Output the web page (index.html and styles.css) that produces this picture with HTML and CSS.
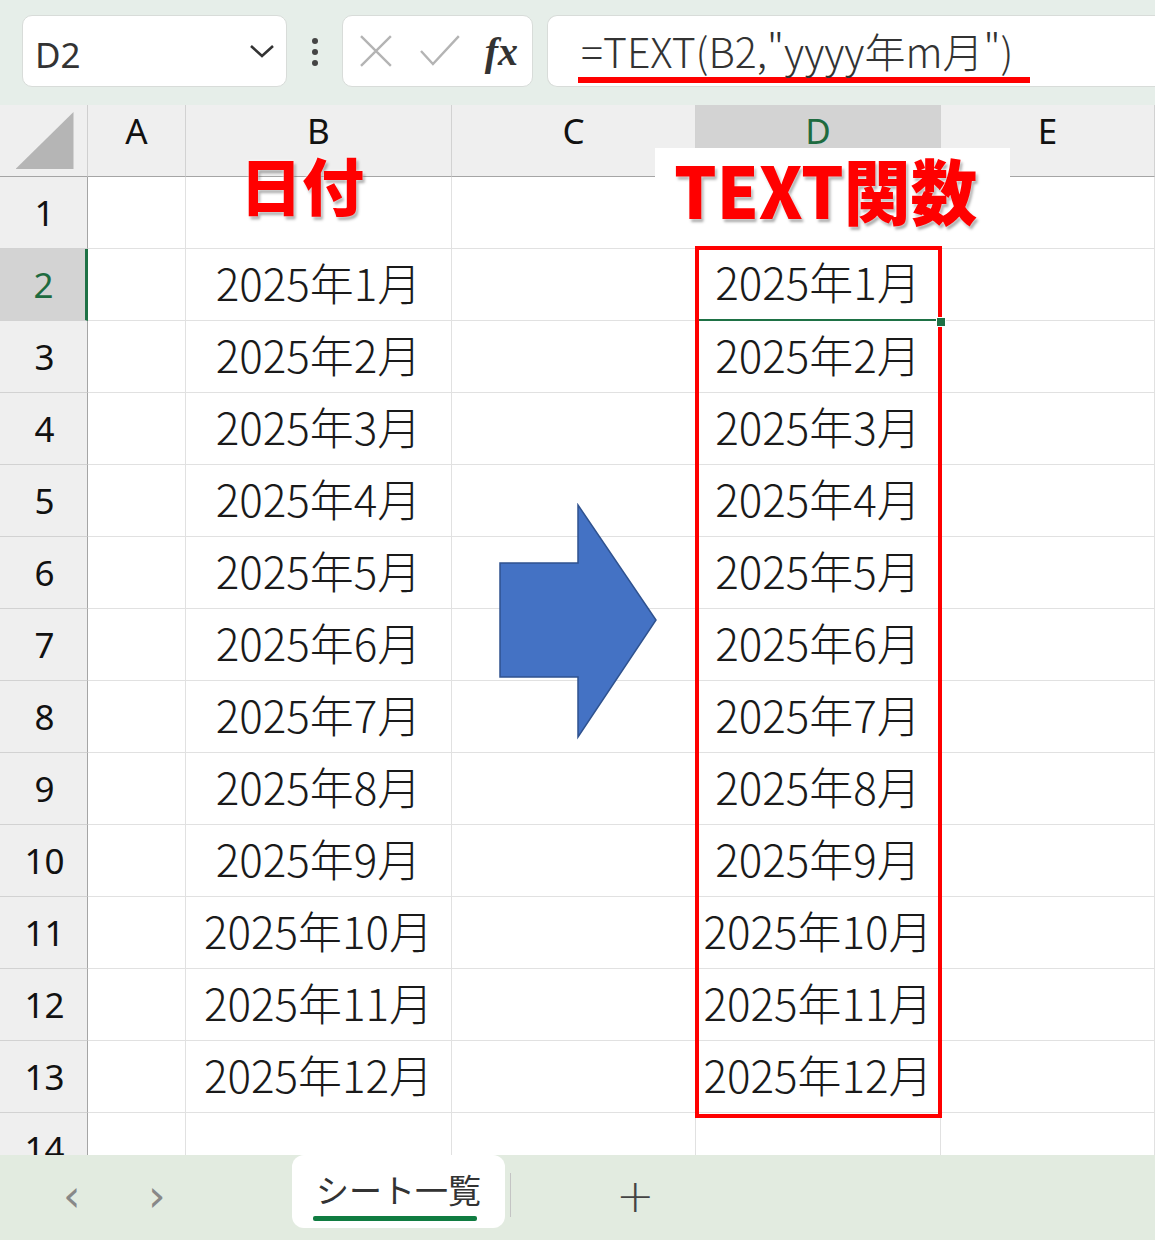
FILE: index.html
```html
<!DOCTYPE html>
<html lang="ja">
<head>
    <meta charset="UTF-8">
    <title>TEXT関数 - シート一覧</title>
    <link rel="stylesheet" href="styles.css">
</head>
<body>
    <div class="formula-bar">
        <div class="name-box">
            <span>D2</span>
            <svg class="chevron" width="28" height="18" viewBox="0 0 28 18"><path d="M3 4 L14 14 L25 4" fill="none" stroke="#333" stroke-width="2.6"/></svg>
        </div>
        <div class="dots"><i></i><i></i><i></i></div>
        <div class="fx-box">
            <svg width="34" height="36" viewBox="0 0 34 36"><path d="M2 3 L32 33 M32 3 L2 33" stroke="#b4b4b4" stroke-width="2.4"/></svg>
            <svg width="42" height="36" viewBox="0 0 42 36"><path d="M2 18 L14 31 L40 3" fill="none" stroke="#b4b4b4" stroke-width="2.4"/></svg>
            <span class="fx">fx</span>
        </div>
        <div class="formula-input">
            <span class="formula">=TEXT(B2,"yyyy年m月")</span>
        </div>
    </div>

    <div class="sheet">
        <div class="grid" id="grid">
            <div class="corner"><span class="tri"></span></div>
            <div class="col-head">A</div>
            <div class="col-head">B</div>
            <div class="col-head">C</div>
            <div class="col-head active">D</div>
            <div class="col-head">E</div>
        </div>

        <div class="label label-date">日付</div>
        <div class="label-box"><span class="label label-text">TEXT関数</span></div>

        <svg class="arrow" width="164" height="240" viewBox="0 0 164 240">
            <polygon points="2,60 80,60 80,2 158,117 80,234 80,174 2,174" fill="#4472c4" stroke="#2f528f" stroke-width="1.5"/>
        </svg>

        <div class="red-box"></div>
        <div class="handle"></div>
    </div>

    <div class="tab-bar">
        <span class="nav">&lsaquo;</span>
        <span class="nav">&rsaquo;</span>
        <div class="tab">シート一覧</div>
        <span class="sep"></span>
        <span class="plus">+</span>
    </div>

    <script>
        let grid = document.getElementById("grid");
        for (let r = 1; r <= 14; r++) {
            let month = (r >= 2 && r <= 13) ? "2025年" + (r - 1) + "月" : "";
            let cells = ["", month, "", month, ""];
            let head = document.createElement("div");
            head.className = "row-head" + (r === 2 ? " active" : "");
            head.innerText = r;
            grid.appendChild(head);
            cells.forEach((text, i) => {
                let cell = document.createElement("div");
                cell.className = "cell" + (r === 2 && i === 3 ? " selected" : "");
                cell.innerText = text;
                grid.appendChild(cell);
            });
        }
    </script>
</body>
</html>
```

FILE: styles.css
```css
body {
    margin: 0;
    width: 1155px;
    height: 1240px;
    overflow: hidden;
    font-family: "Noto Sans CJK JP", "Noto Sans", sans-serif;
    color: #222;
    background: #fff;
}

/* formula bar */
.formula-bar {
    height: 105px;
    box-sizing: border-box;
    padding: 15px 0 0 22px;
    display: flex;
    background: #e6eee9;
}

.name-box,
.fx-box,
.formula-input {
    height: 72px;
    box-sizing: border-box;
    background: #fff;
    border: 1px solid #d8dcd9;
    border-radius: 10px;
    display: flex;
    align-items: center;
}

.name-box {
    width: 265px;
    padding: 0 10px 0 12px;
    justify-content: space-between;
    font-family: "Noto Sans", sans-serif;
    font-size: 35px;
    color: #333;
}

.name-box span {
    margin-top: 6px;
}

.dots {
    width: 14px;
    margin-left: 21px;
    display: flex;
    flex-direction: column;
    justify-content: center;
    align-items: center;
    gap: 5px;
    padding-bottom: 16px;
}

.dots i {
    width: 6px;
    height: 6px;
    border-radius: 50%;
    background: #444;
}

.fx-box {
    width: 191px;
    margin-left: 20px;
    padding: 0 14px 0 16px;
    gap: 26px;
}

.fx {
    font-family: "Liberation Serif", serif;
    font-style: italic;
    font-weight: bold;
    font-size: 40px;
    color: #333;
    margin-left: -2px;
}

.formula-input {
    flex: 1;
    margin-left: 14px;
    border-right: none;
    border-radius: 10px 0 0 10px;
    padding-left: 30px;
}

.formula {
    font-size: 41px;
    font-weight: 300;
    color: #333;
    border-bottom: 6px solid #f00;
    line-height: 1;
    padding: 0 17px 6px 3px;
    margin-top: 10px;
}

/* sheet */
.sheet {
    position: relative;
    height: 1050px;
    overflow: hidden;
}

.grid {
    display: grid;
    grid-template-columns: 88px 98px 266px 244px 245px 214px;
    grid-auto-rows: 72px;
}

.grid > div {
    box-sizing: border-box;
    display: flex;
    align-items: center;
    justify-content: center;
}

.corner {
    background: #efefef;
    border-right: 1px solid #cfcfcf;
    border-bottom: 1px solid #a5a5a5;
}

.tri {
    width: 58px;
    height: 57px;
    background: #b5b5b5;
    clip-path: polygon(100% 0, 100% 100%, 0 100%);
    margin-left: 2px;
}

.col-head {
    background: #efefef;
    border-right: 1px solid #d2d2d2;
    border-bottom: 1px solid #a5a5a5;
    font-family: "Noto Sans", sans-serif;
    font-size: 35px;
    padding-bottom: 20px;
    color: #111;
}

.row-head {
    background: #efefef;
    border-right: 1px solid #a5a5a5;
    border-bottom: 1px solid #d2d2d2;
    font-family: "Noto Sans", sans-serif;
    font-size: 35px;
    padding-left: 2px;
    color: #111;
}

.col-head.active,
.row-head.active {
    background: #d3d3d3;
    color: #1e6b40;
}

.row-head.active {
    border-right: 3px solid #1e7145;
}

.cell {
    border-right: 1px solid #e1e1e1;
    border-bottom: 1px solid #e1e1e1;
    font-size: 44px;
    font-weight: 300;
    padding-bottom: 6px;
    color: #1a1a1a;
}

.cell.selected {
    border-bottom: 2px solid #1e7145;
}

/* annotations */
.label {
    font-weight: 900;
    color: #f00;
    line-height: 1;
    text-shadow: 0 0 3px #fff, 2px 3px 3px rgba(0, 0, 0, 0.35);
}

.label-date {
    position: absolute;
    left: 240px;
    top: 48px;
    font-size: 62px;
}

.label-box {
    position: absolute;
    left: 655px;
    top: 43px;
    width: 355px;
    height: 100px;
    background: #fff;
}

.label-text {
    display: inline-block;
    font-size: 71px;
    margin-left: 19px;
    margin-top: 5px;
    transform: scaleX(0.94);
    transform-origin: left top;
    white-space: nowrap;
}

.arrow {
    position: absolute;
    left: 498px;
    top: 398px;
}

.red-box {
    position: absolute;
    left: 695px;
    top: 141px;
    width: 247px;
    height: 872px;
    box-sizing: border-box;
    border: 4px solid #f00;
}

.handle {
    position: absolute;
    left: 936px;
    top: 212px;
    width: 8px;
    height: 8px;
    background: #1e7145;
    border: 1px solid #fff;
}

/* sheet tabs */
.tab-bar {
    height: 85px;
    background: #e2ebe0;
    display: flex;
    align-items: flex-start;
    padding-left: 63px;
    box-sizing: border-box;
}

.nav {
    width: 85px;
    margin-top: 16px;
    font-family: "DejaVu Sans", sans-serif;
    font-size: 44px;
    color: #888;
    line-height: 50px;
}

.tab {
    margin-left: 59px;
    width: 213px;
    height: 73px;
    box-sizing: border-box;
    background: #fff;
    border-radius: 12px;
    padding: 12px 0 0 24px;
    font-size: 33px;
    color: #333;
    line-height: 44px;
    position: relative;
}

.tab::after {
    content: "";
    position: absolute;
    left: 21px;
    top: 61px;
    width: 164px;
    height: 5px;
    border-radius: 2px;
    background: #107c41;
}

.sep {
    width: 1px;
    height: 44px;
    margin: 18px 0 0 5px;
    background: #c4c4c4;
}

.plus {
    margin: 16px 0 0 105px;
    font-family: "DejaVu Sans", sans-serif;
    font-size: 46px;
    font-weight: 300;
    color: #444;
    line-height: 50px;
}
```
